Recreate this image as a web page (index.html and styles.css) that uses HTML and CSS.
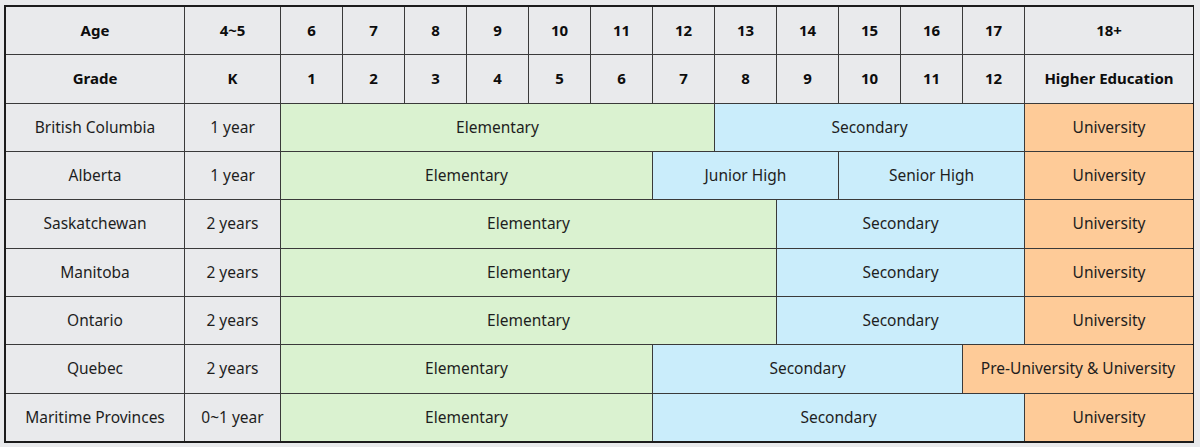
FILE: index.html
```html
<!DOCTYPE html>
<html lang="en">
<head>
<meta charset="utf-8">
<title>Canadian School Systems</title>
<link rel="stylesheet" href="styles.css">
</head>
<body>
<div class="table">
  <div class="cell head">Age</div>
  <div class="cell head">4~5</div>
  <div class="cell head">6</div><div class="cell head">7</div><div class="cell head">8</div><div class="cell head">9</div>
  <div class="cell head">10</div><div class="cell head">11</div><div class="cell head">12</div><div class="cell head">13</div>
  <div class="cell head">14</div><div class="cell head">15</div><div class="cell head">16</div><div class="cell head">17</div>
  <div class="cell head">18+</div>

  <div class="cell head">Grade</div>
  <div class="cell head">K</div>
  <div class="cell head">1</div><div class="cell head">2</div><div class="cell head">3</div><div class="cell head">4</div>
  <div class="cell head">5</div><div class="cell head">6</div><div class="cell head">7</div><div class="cell head">8</div>
  <div class="cell head">9</div><div class="cell head">10</div><div class="cell head">11</div><div class="cell head">12</div>
  <div class="cell head">Higher Education</div>

  <div class="cell">British Columbia</div>
  <div class="cell">1 year</div>
  <div class="cell green span7">Elementary</div>
  <div class="cell blue span5">Secondary</div>
  <div class="cell orange">University</div>

  <div class="cell">Alberta</div>
  <div class="cell">1 year</div>
  <div class="cell green span6">Elementary</div>
  <div class="cell blue span3">Junior High</div>
  <div class="cell blue span3">Senior High</div>
  <div class="cell orange">University</div>

  <div class="cell">Saskatchewan</div>
  <div class="cell">2 years</div>
  <div class="cell green span8">Elementary</div>
  <div class="cell blue span4">Secondary</div>
  <div class="cell orange">University</div>

  <div class="cell">Manitoba</div>
  <div class="cell">2 years</div>
  <div class="cell green span8">Elementary</div>
  <div class="cell blue span4">Secondary</div>
  <div class="cell orange">University</div>

  <div class="cell">Ontario</div>
  <div class="cell">2 years</div>
  <div class="cell green span8">Elementary</div>
  <div class="cell blue span4">Secondary</div>
  <div class="cell orange">University</div>

  <div class="cell">Quebec</div>
  <div class="cell">2 years</div>
  <div class="cell green span6">Elementary</div>
  <div class="cell blue span5">Secondary</div>
  <div class="cell orange span2">Pre-University &amp; University</div>

  <div class="cell">Maritime Provinces</div>
  <div class="cell">0~1 year</div>
  <div class="cell green span6">Elementary</div>
  <div class="cell blue span6">Secondary</div>
  <div class="cell orange">University</div>
</div>
</body>
</html>
```
FILE: styles.css
```css
html, body {
  margin: 0;
  padding: 0;
  background: #e9eaec;
}
body {
  padding: 5px 4px 0 4px;
  font-family: "Noto Sans", "Liberation Sans", sans-serif;
  font-size: 15.5px;
  color: #1e1e1e;
}
.table {
  box-sizing: border-box;
  width: 1190px;
  height: 438px;
  border: 2px solid #1c1c1c;
  background: #3a3a3a;
  display: grid;
  grid-template-columns: 178px 95px repeat(12, 61px) 168px;
  grid-template-rows: repeat(9, 1fr);
  gap: 1px;
}
.cell {
  background: #e9eaec;
  display: flex;
  align-items: center;
  justify-content: center;
  white-space: nowrap;
  padding-bottom: 1px;
}
.head {
  font-weight: 700;
  font-size: 15px;
  color: #0d0d0d;
}
.green { background: #daf2d0; }
.blue { background: #caedfb; }
.orange { background: #fecb98; }
.span2 { grid-column: span 2; }
.span3 { grid-column: span 3; }
.span4 { grid-column: span 4; }
.span5 { grid-column: span 5; }
.span6 { grid-column: span 6; }
.span7 { grid-column: span 7; }
.span8 { grid-column: span 8; }
```
